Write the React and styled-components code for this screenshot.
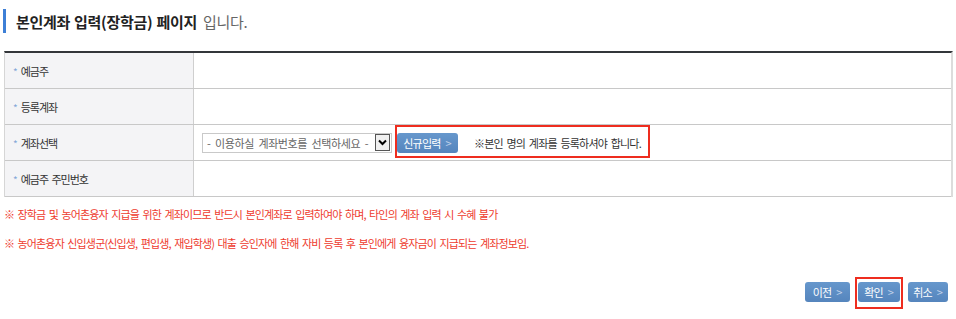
import React from 'react';
import styled, { createGlobalStyle } from 'styled-components';

const Global = createGlobalStyle`
  html, body { margin: 0; padding: 0; background: #fff; }
  body { font-family: "Noto Sans CJK KR", "Noto Sans", sans-serif; }
`;

const Page = styled.div`
  width: 956px;
  height: 319px;
  box-sizing: border-box;
  padding: 9px 3px 0 4px;
  overflow: hidden;
`;

const Title = styled.h2`
  margin: 0 0 18px -1px;
  height: 24px;
  display: flex;
  align-items: center;
  border-left: 3px solid #3d7fd6;
  padding-left: 10px;
  font-size: 15px;
  font-weight: 700;
  color: #222;
  letter-spacing: -0.3px;
  word-spacing: 1px;
`;

const TitleSub = styled.span`
  font-weight: 400;
  color: #666;
  margin-left: 6px;
`;

const Table = styled.div`
  width: 949px;
  border-top: 2px solid #33363a;
  border-left: 1px solid #d6d6d6;
  border-right: 2px solid #dcdcdc;
  box-sizing: border-box;
`;

const Row = styled.div`
  display: grid;
  grid-template-columns: 189px 1fr;
  height: 36px;
  border-bottom: 1px solid #c8c8c8;
  box-sizing: border-box;
`;

const Label = styled.div`
  background: #f4f4f6;
  border-right: 1px solid #cfcfcf;
  display: flex;
  align-items: center;
  padding-left: 8px;
  font-size: 11px;
  letter-spacing: -1px;
  word-spacing: 2px;
  color: #333;
  white-space: pre;
`;

const Star = styled.span`
  color: #84a8d8;
  font-size: 10px;
  margin-right: 4px;
  position: relative;
  top: 1px;
`;

const Cell = styled.div`
  display: flex;
  align-items: center;
  padding-left: 8px;
`;

const SelectBox = styled.div`
  width: 190px;
  height: 20px;
  box-sizing: border-box;
  border: 1px solid #c9c9c9;
  display: flex;
  align-items: center;
  justify-content: space-between;
  padding-left: 4px;
  font-size: 11px;
  color: #666;
  letter-spacing: -0.4px;
  word-spacing: 2.5px;
  background: #fff;
  white-space: pre;
`;

const ArrowBox = styled.span`
  width: 15px;
  height: 17px;
  box-sizing: border-box;
  border: 1px solid #555;
  background: #f0f0f0;
  display: flex;
  align-items: center;
  justify-content: center;
  margin-right: 1px;
`;

const Highlight = styled.div`
  position: relative;
  display: flex;
  align-items: center;
  margin-left: 5px;
  &::after {
    content: "";
    position: absolute;
    left: -2px;
    top: ${p => p.$top}px;
    right: ${p => p.$right}px;
    bottom: ${p => p.$bottom}px;
    border: 2px solid #ee2d1f;
    pointer-events: none;
  }
`;

const BlueButton = styled.button`
  height: 20px;
  width: ${p => p.$w}px;
  padding: 0;
  border: none;
  border-radius: 3px;
  background: linear-gradient(#6697cc, #5585bd);
  color: #fff;
  font-family: inherit;
  font-size: 11px;
  letter-spacing: -0.8px;
  display: flex;
  align-items: center;
  justify-content: center;
  gap: 5px;
  cursor: pointer;
`;

const Chev = styled.span`
  color: #c2d3ea;
  font-size: 11px;
  letter-spacing: 0;
`;

const Notice = styled.span`
  margin-left: 16px;
  font-size: 11px;
  color: #333;
  letter-spacing: -0.8px;
  word-spacing: 2px;
`;

const Notes = styled.div`
  margin-top: 9px;
  display: flex;
  flex-direction: column;
  gap: 13px;
`;

const Note = styled.p`
  margin: 0;
  font-size: 11px;
  line-height: 16px;
  color: #ee3b2e;
  letter-spacing: -0.85px;
  word-spacing: 1.8px;
`;

const Buttons = styled.div`
  margin-top: 31px;
  display: flex;
  justify-content: flex-end;
  padding-right: 5px;
  gap: 8px;
`;

const BoxedButton = styled.div`
  position: relative;
  &::after {
    content: "";
    position: absolute;
    left: -3px;
    right: -3px;
    top: -5px;
    bottom: -7px;
    border: 2px solid #ee2d1f;
    pointer-events: none;
  }
`;

const Arrow = () => (
  <svg width="9" height="7" viewBox="0 0 9 7">
    <path d="M1 1.5 L4.5 5 L8 1.5" fill="none" stroke="#000" strokeWidth="2" />
  </svg>
);

const Btn = ({ children, w }) => (
  <BlueButton $w={w}>
    {children}
    <Chev>&gt;</Chev>
  </BlueButton>
);

export default function App() {
  return (
    <>
      <Global />
      <Page>
        <Title>
          본인계좌 입력(장학금) 페이지<TitleSub>입니다.</TitleSub>
        </Title>
        <Table>
          <Row>
            <Label><Star>*</Star>예금주</Label>
            <Cell />
          </Row>
          <Row>
            <Label><Star>*</Star>등록계좌</Label>
            <Cell />
          </Row>
          <Row>
            <Label><Star>*</Star>계좌선택</Label>
            <Cell>
              <SelectBox>
                - 이용하실 계좌번호를 선택하세요 -
                <ArrowBox><Arrow /></ArrowBox>
              </SelectBox>
              <Highlight $top={-8} $right={-9} $bottom={-5}>
                <Btn w={61}>신규입력</Btn>
                <Notice>※본인 명의 계좌를 등록하셔야 합니다.</Notice>
              </Highlight>
            </Cell>
          </Row>
          <Row>
            <Label><Star>*</Star>예금주 주민번호</Label>
            <Cell />
          </Row>
        </Table>
        <Notes>
          <Note>※ 장학금 및 농어촌융자 지급을 위한 계좌이므로 반드시 본인계좌로 입력하여야 하며, 타인의 계좌 입력 시 수혜 불가</Note>
          <Note>※ 농어촌융자 신입생군(신입생, 편입생, 재입학생) 대출 승인자에 한해 자비 등록 후 본인에게 융자금이 지급되는 계좌정보임.</Note>
        </Notes>
        <Buttons>
          <Btn w={45}>이전</Btn>
          <BoxedButton><Btn w={42}>확인</Btn></BoxedButton>
          <Btn w={40}>취소</Btn>
        </Buttons>
      </Page>
    </>
  );
}
